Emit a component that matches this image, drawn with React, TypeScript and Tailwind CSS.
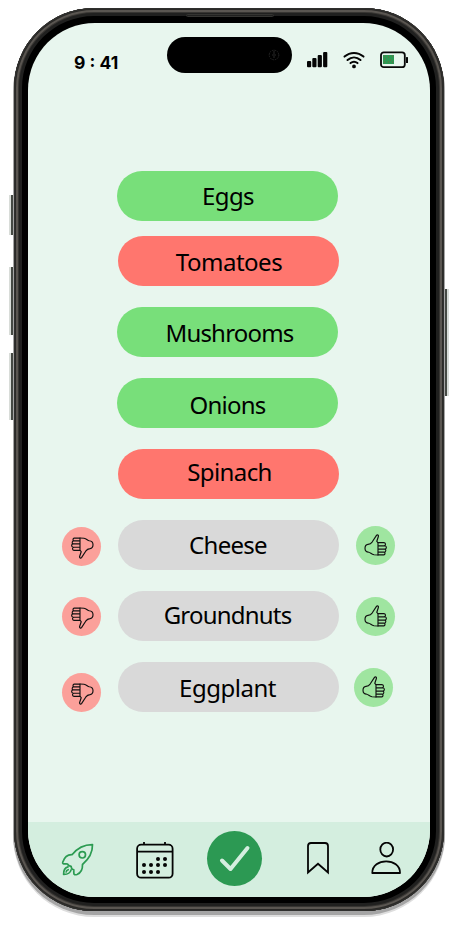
import React from "react";

type Row = { name: string; pill: string; label: string; gap: string; vote?: { down: string; up: string } };

const rows: Row[] = [
  { name: "Eggs", pill: "bg-[#78df7a] mr-px", label: "pb-[1px] pl-[1px] tracking-[-0.6px]", gap: "" },
  { name: "Tomatoes", pill: "bg-[#ff766e] ml-px", label: "pt-[1px] pl-[1px] tracking-[-0.5px]", gap: "mt-[15px]" },
  { name: "Mushrooms", pill: "bg-[#78df7a] mr-px", label: "pt-[2px] pl-[4px] tracking-[-0.8px]", gap: "mt-[21px]" },
  { name: "Onions", pill: "bg-[#78df7a] mr-px", label: "pt-[3px] tracking-[-0.8px]", gap: "mt-[21px]" },
  { name: "Spinach", pill: "bg-[#ff766e] ml-px", label: "pb-[5px] pl-[2px] tracking-[-0.6px]", gap: "mt-[21px]" },
  { name: "Cheese", pill: "bg-[#d9d9d9] ml-px", label: "pb-[1px] pr-[1px] tracking-[-0.7px]", gap: "mt-[21px]", vote: { down: "mt-[7px]", up: "mt-[6px] mr-[35px]" } },
  { name: "Groundnuts", pill: "bg-[#d9d9d9] ml-px", label: "pb-[3px] pr-[2px] tracking-[-0.8px]", gap: "mt-[21px]", vote: { down: "mt-[6px]", up: "mt-[6px] mr-[35px]" } },
  { name: "Eggplant", pill: "bg-[#d9d9d9] ml-px", label: "pt-[1px] pr-[2px] tracking-[-0.5px]", gap: "mt-[21px]", vote: { down: "mt-[11px]", up: "mt-[6px] mr-[37px]" } },
];

function Thumb({ down = false }: { down?: boolean }) {
  return (
    <svg width="24" height="24" viewBox="0 0 24 24" className={down ? "rotate-180" : ""} fill="none" stroke="#111" strokeWidth="1.15" strokeLinejoin="round" strokeLinecap="round">
      <path d="M13.700 8.300 12.800 7.300 14.300 2.800C14.900 1 13.300.2 12.300 1.600L8.300 7.800C6.800 9.900 6 10.200 4 10.400 1.700 10.700 1 12.400 1 14.200c0 2.700 1 3.800 3.800 4C6.500 18.500 7.500 20.500 10 20.800l4 .2" />
      <path d="M14 8.600h6c2 .2 2 3.100 0 3.200h-6M20 11.800h.8c2.100.2 2.100 3.200 0 3.300H14M20.800 15.100c1.500.4 1.300 2.900-.4 3H14M20.300 18.100c1.100.4.9 2.700-.5 2.800H14M14 8.600V21" />
    </svg>
  );
}

function Status() {
  return (
    <header className="flex h-[54px] shrink-0 items-start pt-[14px]">
      <div className="ml-[46px] mt-[14px] w-[92.500px] whitespace-pre text-[17.500px] leading-6 font-bold text-black">9 : 41</div>
      <div className="flex h-9 w-[125px] items-center justify-end rounded-full bg-black pr-3">
        <svg width="12" height="12" viewBox="0 0 12 12" fill="none" stroke="#282828"><circle cx="6" cy="6" r="4.800" strokeDasharray="1.500 1" /><path d="M6 2v3M4 6h4M5 8h2" /></svg>
      </div>
      <svg className="ml-[15px] mt-[14px]" width="22" height="17" viewBox="0 0 22 17" fill="#050505">
        <rect x="0" y="10" width="4.200" height="6.200" rx="1" /><rect x="5.300" y="7" width="4.200" height="9.200" rx="1" /><rect x="10.700" y="4" width="4.200" height="12.200" rx="1" /><rect x="16.100" y="1" width="4.200" height="15.200" rx="1" />
      </svg>
      <svg className="ml-[14px] mt-[14px]" width="22" height="18" viewBox="0 0 22 18" fill="none" stroke="#050505" strokeWidth="2" strokeLinecap="round">
        <path d="M1.500 5.600C7.200.7 14.800.7 20.500 5.600M4.500 9c4-3.500 9-3.500 13 0M7.500 12.100c2.200-1.800 4.800-1.800 7 0" /><circle cx="11" cy="15.400" r=".9" fill="#050505" />
      </svg>
      <svg className="ml-[15px] mt-[14px]" width="30" height="18" viewBox="0 0 30 18" fill="none">
        <rect x="1" y="1.300" width="23.800" height="14.900" rx="2.800" stroke="#080808" strokeWidth="1.800" /><path d="M3 4h11v9H3z" fill="#2c9953" /><path d="M4 5h1m3 1h1m3-1h1M5 8h1m4 1h1M4 11h1m3 0h1m3 0h1" stroke="#79643f" /><rect x="26" y="6" width="2" height="6" rx=".6" fill="#080808" />
      </svg>
    </header>
  );
}

function Navigation() {
  return (
    <nav className="flex h-[75px] shrink-0 items-start bg-[#d4eedf]">
      <svg className="ml-[33px] mt-[21px]" width="34" height="34" viewBox="0 0 34 34" fill="none" stroke="#2c9b52" strokeWidth="1.700" strokeLinejoin="round" strokeLinecap="round">
        <path d="M11 11.700C16 5.500 22 1.500 31.500 1.600c.2 9-4 14.900-10 19.900.2 4.600-1.500 8.300-5.500 10-2 .6-3.300.2-3.200-1.500v-3.200c-1.800-.3-2.600-1.700-2.700-3.500-1.700-.3-3.200-1-3.500-2.300-2.700-.4-5.500.8-4.900-1.700C3.300 14.500 6.300 11.500 11 11.700Z" />
        <circle cx="21.300" cy="11.800" r="3.200" /><path d="M7 23.900c-3.800 1-4.500 3.500-4.400 7.500 4.200.1 6.600-1.200 7.500-4.500M7.200 26.700c-1.500.4-1.900 1.200-2 2.300" />
      </svg>
      <svg className="ml-[41px] mt-[20px]" width="38" height="38" viewBox="0 0 38 38" fill="none" stroke="#050505" strokeWidth="1.800">
        <rect x="1.100" y="2.700" width="35.500" height="33" rx="4" /><path d="M1 9.700h35.500M8 0v3M29 0v3" />
        <g fill="#050505" stroke="none"><circle cx="22" cy="17" r="2" /><circle cx="29" cy="17" r="2" /><circle cx="8" cy="23" r="2" /><circle cx="15" cy="23" r="2" /><circle cx="22" cy="23" r="2" /><circle cx="29" cy="23" r="2" /><circle cx="8" cy="30" r="2" /><circle cx="15" cy="30" r="2" /><circle cx="22" cy="30" r="2" /></g>
      </svg>
      <div className="ml-[33px] mt-[9px] flex size-[55px] items-center justify-center rounded-full bg-[#2c9953]">
        <svg width="55" height="55" viewBox="0 0 55 55" fill="none" stroke="#d4eedf" strokeWidth="4" strokeLinecap="round" strokeLinejoin="round"><path d="m15 29.500 8.500 8.500L40.500 17" /></svg>
      </div>
      <svg className="ml-[45px] mt-[20px]" width="22" height="33" viewBox="0 0 22 33" fill="none" stroke="#050505" strokeWidth="1.800"><path d="M1 30.500V4q0-3 3-3h14q3 0 3 3v26.500L11 21.800Z" /></svg>
      <svg className="ml-[42px] mt-[20px]" width="31" height="33" viewBox="0 0 31 33" fill="none" stroke="#050505" strokeWidth="1.800" strokeLinejoin="round"><ellipse cx="15.700" cy="7.600" rx="6.400" ry="6.900" /><path d="M1.300 31C1 15.500 29.300 15.500 29 31Z" /></svg>
    </nav>
  );
}

export default function App() {
  return (
    <main className="relative flex h-[928px] w-[458px] items-start overflow-hidden bg-white font-['Inter','Liberation_Sans',sans-serif]">
      <i className="absolute left-[9px] top-[195px] h-[40px] w-[5px] border-l-2 border-[#d8dcd8] bg-[#454944]" />
      <i className="absolute left-[9px] top-[267px] h-[68px] w-[5px] border-l-2 border-[#d8dcd8] bg-[#454944]" />
      <i className="absolute left-[9px] top-[353px] h-[67px] w-[5px] border-l-2 border-[#d8dcd8] bg-[#454944]" />
      <i className="absolute left-[443px] top-[289px] h-[107px] w-[6px] border-r-2 border-[#d8dcd8] bg-[#454944]" />
      <div className="relative ml-[14px] mt-[8px] h-[903px] w-[430px] shrink-0 rounded-[80px] bg-black pl-[14px] pt-[15px] shadow-[0_3px_0_1px_#a5a5a5,0_5px_0_1px_#dedede,inset_0_0_0_1px_#30302e,inset_0_0_0_2px_#2b2a28,inset_0_0_0_4px_#5a5651,inset_0_0_0_5px_#373532,inset_0_0_0_8px_#20201f]">
        <section className="flex h-[874px] w-[402px] flex-col overflow-hidden rounded-[67px] bg-[#e8f6ee]">
          <Status />
          <div className="flex grow flex-col pt-[94px]">
            {rows.map((row) => (
              <div key={row.name} className={`flex h-[50px] shrink-0 items-start ${row.gap}`}>
                <div className="flex w-[89px] shrink-0 pl-[34px]">
                  {row.vote && <div className={`flex size-[39px] shrink-0 items-center justify-center rounded-full bg-[#fba09a] ${row.vote.down}`}><Thumb down /></div>}
                </div>
                <div className={`h-[50px] w-[221px] shrink-0 rounded-full ${row.pill}`}>
                  <div className={`flex h-[50px] items-center justify-center font-['Noto_Sans',sans-serif] text-[24px] leading-[34px] text-black ${row.label}`}>{row.name}</div>
                </div>
                {row.vote && <div className={`ml-auto flex size-[39px] shrink-0 items-center justify-center rounded-full bg-[#9fe5a0] ${row.vote.up}`}><Thumb /></div>}
              </div>
            ))}
          </div>
          <Navigation />
        </section>
      </div>
      <i className="absolute left-[186px] top-[14px] h-[3px] w-[88px] rounded-full border border-[#343431]" />
    </main>
  );
}
